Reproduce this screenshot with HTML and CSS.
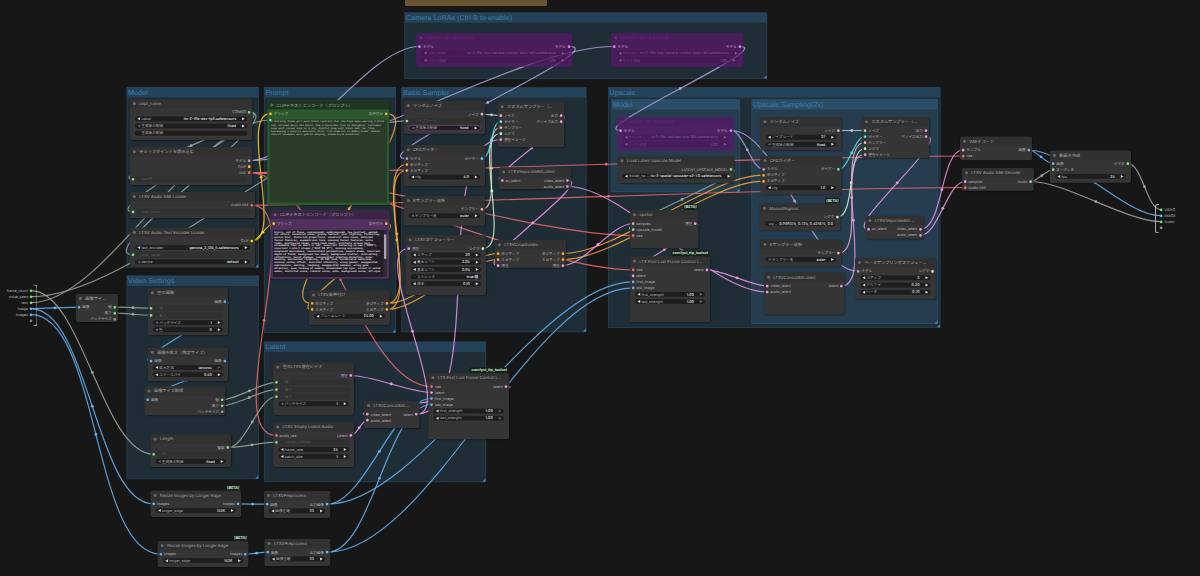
FILE: index.html
```
<!DOCTYPE html>
<html lang="ja">
<head>
<meta charset="utf-8"/>
<meta name="viewport" content="width=device-width,initial-scale=1.0"/>
    <title>Workflow</title>

    <link rel="stylesheet" href="styles.css">
</head>
<body>
<main id="canvas">
    <div class="note"></div>
    <section class="layer" id="groups"></section>
    <svg id="links" width="1200" height="576" viewBox="0 0 1200 576"></svg>
    <section class="layer" id="nodes"></section>

    <div class="layer">
        <ul class="port port_in">
            <li>frame_count<i></i></li>
            <li>noise_seed<i></i></li>
            <li>text<i></i></li>
            <li>image<i class="img"></i></li>
            <li>images<i class="img"></i></li>
            <li><i class="none"></i></li>
        </ul>
        <ul class="port port_out">
            <li><i></i>VIDEO</li>
            <li><i class="img"></i>IMAGE</li>
            <li><i></i>Audio</li>
            <li><i class="none"></i></li>
        </ul>
    </div>
</main><!-- canvas -->

<script src="graph.js"></script>
</body>
</html>
```
FILE: styles.css
```
*{margin:0;padding:0;box-sizing:border-box;}
li{list-style:none;}

body{
    overflow:hidden;
    background:#171717;
    font-family:Inter,"Noto Sans CJK JP",sans-serif;
    text-rendering:geometricPrecision;}

#canvas{
    position:relative; overflow:hidden;
    width:1200px;height:576px;
    background:#171717;}

/* everything in a layer is in graph units, zoomed out to 30% */
.layer{
    position:absolute;
    left:0;top:0;
    width:4000px;height:1920px;
    transform:scale(.3) rotate(.003deg);
    transform-origin:0 0;}

#links{position:absolute;left:0;top:0;}
#links path{fill:none;stroke-width:1.2;}

.note{
    position:absolute;
    left:405px;top:-6px;
    width:142px;height:12px;
    background:#6b5531;
    border-radius:1px;}

/* groups */
.group{
    position:absolute;
    background:rgba(56,112,150,.25);
    border:2px solid rgba(56,118,158,.4);}

.group h2{
    height:33px;
    padding-left:3px;
    background:rgba(52,112,158,.32);
    color:#3a7dab;
    font:400 24px/32px "Liberation Sans",sans-serif;
    white-space:nowrap;}

.group::after{
    content:"";
    position:absolute;
    right:0;bottom:0;
    border:5px solid transparent;
    border-right-color:#3d87b8;border-bottom-color:#3d87b8;}

/* nodes */
.node{
    position:absolute;
    display:flex;flex-direction:column;
    background:#353535;
    border-radius:6px;
    box-shadow:2px 2px 5px rgba(0,0,0,.5);
    color:#b4b4b4;
    font-size:12px;
    white-space:nowrap;}

.node h3{
    flex:none;
    display:flex;align-items:center;
    height:30px;
    padding-left:10px;gap:11px;
    background:#313131;
    border-radius:6px 6px 0 0;
    color:#a8a8a8;
    font-size:14px;font-weight:400;}

.node h3::before{
    content:"";
    width:10px;height:10px;
    background:#6a6a6a;
    border-radius:50%;}

.slots{
    flex:none;
    display:flex;justify-content:space-between;
    padding:4px 6px 0;}

.slots li{
    display:flex;align-items:center;
    height:20px;gap:6px;
    line-height:20px;}

.outs li{justify-content:flex-end;}

.dot{
    flex:none;
    width:9px;height:9px;
    border-radius:50%;}

.widgets{
    flex:1;min-height:0;
    display:flex;flex-direction:column;
    padding:2px 15px 0;
    gap:4px;}

.widget{
    flex:none;
    position:relative;
    display:flex;align-items:center;
    height:20px;
    padding:0 9px;gap:4px;
    background:#1e1e1e;
    border:1px solid #555;
    border-radius:10px;
    line-height:18px;}

.widget b{
    margin-left:auto;
    padding-right:16px;
    color:#eee;
    font-weight:500;}

.widget::before,
.widget.arrow::after{
    content:"";
    border:5px solid transparent;
    border-left-width:0;
    border-right:9px solid transparent;}

.widget.arrow::before{border-right-color:#ddd;}
.widget.arrow::after{
    border-right-width:0;
    border-left:9px solid #ddd;}
.widget.dim::before{border-right-color:#666;}
.widget.dimend::after{border-left-color:#666;}
.widget.wide{padding-left:0;}
.widget.wide b{padding-right:0;}
.widget.focus{border:2px solid #8d3aa5;}
.widget.toggle b{padding-right:0;}
.widget.toggle::after{
    content:"";
    width:14px;height:14px;
    margin-left:-2px;
    background:#8799b5;
    border-radius:50%;}

/* widget fed by a link */
.widget.linked{
    background:#303030;
    border-color:transparent;
    color:#5e5e5e;}
.widget.linked .dot{
    position:absolute;
    left:-10px;top:5px;}

.badge{
    position:absolute;
    right:2px;top:-20px;
    padding:0 4px;
    background:#0d2614;
    border-radius:3px;
    color:#f0f6f0;
    font-size:12.5px;font-weight:600;line-height:19px;}

.text{
    flex:1;min-height:0;
    overflow:hidden;
    margin:9px 8px 8px;
    padding:4px;
    color:#d3ddd3;
    font-family:"Liberation Mono",monospace;
    font-size:8.3px;line-height:10.5px;
    white-space:pre;}

/* node colours */
.green{background:#2b592c;}
.green h3{background:#1e3620;}
.green .text{background:#2a3b2a;}
.green .text::before{
    content:"";
    position:absolute;
    left:6px;top:61px;
    width:8px;height:8px;
    background:#7ee88a;
    border-radius:50%;}

.purple{background:#50305d;}
.purple h3{background:#3b2445;}
.purple .text{
    margin-top:12px;margin-bottom:6px;
    padding:2px 4px;
    background:#251d29;
    border-right:12px solid #302b33;
    color:#eee;
    font-weight:700;line-height:9.3px;}
.purple .text::after{
    content:"";
    position:absolute;
    right:10px;top:80px;
    width:8px;height:82px;
    background:#a9a3ac;
    border-radius:4px;}

.bypass{
    background:rgba(98,22,112,.68);
    box-shadow:none;
    color:#c9a5d2;}
.bypass h3{background:rgba(70,30,90,.28);color:#632d74;}
.bypass h3::before{background:#632d74;}
.bypass .widget{
    background:rgba(55,20,70,.28);
    border-color:transparent;
    color:#6f3a80;}
.bypass .widget b{color:#8a5a9c;font-weight:400;}
.bypass .widget.arrow::before{border-right-color:#8c559e;}
.bypass .widget.arrow::after{border-left-color:#8c559e;}

/* subgraph inputs and outputs */
.port{
    position:absolute;
    color:#bbb;
    font-size:12px;line-height:20px;}
.port li{display:flex;align-items:center;height:20px;gap:6px;}
.port i{
    width:9px;height:9px;
    background:#6fe26f;
    border-radius:50%;}
.port i.img{background:#64b5f6;}
.port i.none{background:#888;}
.port::before{
    content:"";
    position:absolute;
    top:0;bottom:0;
    width:12px;
    border:3px solid #bbb;}

.port_in{
    left:0;top:948px;
    width:125px;height:140px;
    padding:11px 17px 0 0;}
.port_in li{justify-content:flex-end;}
.port_in::before{
    right:0;
    border-left:0;
    border-radius:0 10px 10px 0;}

.port_out{
    left:3850px;top:680px;
    width:130px;height:98px;
    padding:9px 0 0 16px;}
.port_out::before{
    left:0;
    border-right:0;
    border-radius:10px 0 0 10px;}
```
FILE: graph.js
```
const groups = [
    ['Camera LoRAs (Ctrl-B to enable)', 404.5, 12.3, 767, 79],
    ['Model', 126.5, 87, 259, 268],
    ['Prompt', 264, 87, 396, 333],
    ['Basic Sampler', 401.5, 87, 586.5, 332],
    ['Video Settings', 126.5, 275.5, 259, 479],
    ['Latent', 264, 341.5, 486, 482],
    ['Upscale', 608, 87, 940.5, 328],
    ['Model', 611.5, 99, 740, 192],
    ['Upscale Sampling(2x)', 751.5, 99, 938, 324],
];

const C = {
    model:'#b39ddb', clip:'#ffd500', vae:'#f06a6a', lat:'#ee96e8', img:'#64b5f6',
    cond:'#ffa931', noise:'#c4c4c4', guider:'#55e6e6', sampler:'#ecb4b4',
    sigma:'#cdffcd', val:'#7de88a', int:'#99aa99', audio:'#a5a5a5', none:'#999',
};

const positive = `A charming anime girl with black twintail hair and blue eyes wearing a black
top, striped skirt and boots. She transitions from an energetic, confident
pose with raised arms to a shy, bashful pose with hands near her face,
expressing a playful emotional shift from cheerful to embarrassed. Smooth
natural movement with gentle swaying, anime-style animation.`;

const negative = `blurry, out of focus, overexposed, underexposed, low contrast, washed
out colors, excessive noise, grainy texture, poor lighting, flickering,
motion blur, distorted proportions, unnatural skin tones, deformed
facial features, asymmetrical face, missing facial features, extra
limbs, disfigured hands, wrong hand count, artifacts around text,
unreadable text on shirt or hat, incorrect lettering on cap ("PNTR"),
incorrect t-shirt slogan ("JUST DO IT"), missing microphone,
misplaced microphone, inconsistent perspective, camera shake, incorrect
depth of field, background too sharp, background clutter, distracting
reflections, harsh shadows, inconsistent lighting direction, color
banding, cartoonish rendering, 3D CGI look, unrealistic materials,
uncanny valley effect, incorrect ethnicity, wrong gender, exaggerated
expressions, smiling, laughing, exaggerated sadness, wrong gaze
direction, eyes looking at camera, mismatched lip sync, silent or muted
audio, distorted voice, robotic voice, echo, background noise, off-sync`;

/* id: title, left, top, right, bottom, inputs, outputs, widgets, class, badge
   slots are "label:type", widgets are "label|value|flags" */
const nodes = {
    lora1:['LoRAローダーモデルのみ', 416.5,33.3,572,67, 'モデル:model','モデル:model', ['lora_name|ltx-2-19b-lora-camera-control-dolly-left.safetensors','モデル強度|1.00'],'bypass'],
    lora2:['LoRAローダーモデルのみ', 611,33.3,743,67, 'モデル:model','モデル:model', ['lora_na …|ltx-2-19b-lora-camera-control-dolly-left.safetensors','モデル強度|1.00'],'bypass'],
    ckptName:['ckpt_name', 130,99,252.3,140, '','COMBO:val', ['value|ltx-2-19b-dev-fp8.safetensors','生成後の制御|fixed|dim','生成後の制御||plain']],
    ckpt:['チェックポイントを読み込む', 130,147.3,252.3,185, '','モデル:model,CLIP:clip,VAE:vae', ['ckpt名||linked']],
    ave:['LTXV Audio VAE Loader', 130,192,255,218, '','Audio VAE:vae', ['ckpt_name||linked']],
    te:['LTXV Audio Text Encoder Loader', 130,227.7,255,267, '','CLIP:clip', ['text_encoder|gemma_3_12B_it.safetensors','ckpt_name||linked','device|default|dim']],
    pos:['CLIPテキストエンコード（プロンプト）', 267.3,100.5,389.3,205, 'クリップ:clip','条件付け:cond', positive,'green'],
    neg:['CLIPテキストエンコード（プロンプト）', 270.7,210.3,389.3,278.7, 'クリップ:clip','条件付け:cond', negative,'purple'],
    cond:['LTXV条件付け', 309,290.3,390,325, 'ポジティブ:cond,ネガティブ:cond','ポジティブ:cond,ネガティブ:cond', ['フレームレート|25.00']],
    noise:['ランダムノイズ', 403.7,101,485,134, '','ノイズ:noise', ['ノイズシード||linked','生成後の制御|fixed|dim focus']],
    cfg:['CFGガイダー', 403.7,145.3,485,186, 'モデル:model,ポジティブ:cond,ネガティブ:cond','ガイダー:guider', ['cfg|4.0']],
    ksel:['Kサンプラー選択', 403.7,196,485,225.7, '','サンプラー:sampler', ['サンプラー名|euler|dim']],
    sched:['LTXVスケジューラー', 405.7,235.3,486,295, '潜在:lat','シグマ:sigma', ['ステップ|20','最大シフト|2.05','基本シフト|0.95','ストレッチ|true|toggle','端末|0.10']],
    custom:['カスタムサンプラー（…', 497.7,102.3,564.3,147.3, 'ノイズ:noise,ガイダー:guider,サンプラー:sampler,シグマ:sigma,潜在イメージ:lat','出力:lat,デノイズ出力:lat', []],
    sep:['LTXVSeparateAVLatent', 499.3,167.3,570.7,189.3, 'av_latent:lat','video_latent:lat,audio_latent:lat', []],
    crop:['LTXVCropGuides', 495,240.3,566,267.5, 'ポジティブ:cond,ネガティブ:cond,潜在:lat','ポジティブ:cond,ネガティブ:cond,潜在:lat', []],
    size:['画像サイ…', 76,294,118,322, '画像:img','幅:val,高さ:val,バッチサイズ:none', []],
    empty:['空の画像', 148,288.3,228,335, '','画像:img', ['幅||linked','高さ||linked','バッチサイズ|1|dim','色|0|dim']],
    scale:['画像を拡大（指定サイズ）', 148,347.7,228,381, '画像:img','画像:img', ['拡大方法|lanczos|dimend','スケールバイ|0.50']],
    getSize:['画像サイズ取得', 144.7,386.5,225.3,415, '画像:img','幅:val,高さ:val,バッチサイズ:none', []],
    length:['Length', 150.5,434.3,231,467, '','整数:val', ['値||linked','生成後の制御|fixed|dim']],
    vid:['空のLTXV潜在ビデオ', 273.3,362.3,354,415, '','潜在:lat', ['幅||linked','高さ||linked','長さ||linked','バッチサイズ|1|dim']],
    aud:['LTXV Empty Latent Audio', 273.3,422.3,354,467, 'audio_vae:vae','Latent:lat', ['frames_number||linked','frame_rate|25','batch_size|1']],
    concat:['LTXVConcatAVL…', 364.3,401,419.3,428, 'video_latent:lat,audio_latent:lat','latent:lat', []],
    flf:['LTX First Last Frame Control (…', 428.5,373.3,509,439, 'vae:vae,latent:lat,first_image:img,last_image:img','latent:lat', ['first_strength|1.00|dimend','last_strength|1.00|dimend'],'','comfyui_ttp_toolset'],
    resize1:['Resize Images by Longer Edge', 150.5,490.7,241.3,517, 'images:img','images:img', ['longer_edge|1536'],'','[BETA]'],
    resize2:['Resize Images by Longer Edge', 157.7,540.9,248.5,567, 'images:img','images:img', ['longer_edge|1536'],'','[BETA]'],
    pre1:['LTXVPreprocess', 264,491,330.3,518, '画像:img','出力画像:img', ['画像圧縮|33']],
    pre2:['LTXVPreprocess', 264.7,539,330.3,566, '画像:img','出力画像:img', ['画像圧縮|33']],
    upLora:['LoRAローダーモデルのみ', 617.5,117.3,734,151, 'モデル:model','モデル:model', ['lora_na …|ltx-2-19b-distilled-lora-384.safetensors','モデル強度|1.00'],'bypass'],
    loadUp:['Load Latent Upscale Model', 617.5,156.2,734,183, '','LATENT_UPSCALE_MODEL:val', ['model_na …|ltx-2-spatial-upscaler-x2-1.0.safetensors']],
    spatial:['spatial', 630,210.3,698.5,248, 'samples:lat,upscale_model:val,vae:vae','潜在:lat', [],'','[BETA]'],
    flf2:['LTX First Last Frame Control (…', 630,256.6,710,322, 'vae:vae,latent:lat,first_image:img,last_image:img','latent:lat', ['first_strength|1.00|dimend','last_strength|1.00|dimend'],'','comfyui_ttp_toolset'],
    noise2:['ランダムノイズ', 760.5,117.3,841.5,150, '','ノイズ:noise', ['ノイズシード|37','生成後の制御|fixed|dim']],
    cfg2:['CFGガイダー', 760.5,156,841.5,194.5, 'モデル:model,ポジティブ:cond,ネガティブ:cond','ガイダー:guider', ['cfg|1.0']],
    manual:['ManualSigmas', 760,203.7,840.5,230.3, '','シグマ:sigma', ['sig …|0.909375, 0.725, 0.421875, 0.0|plain wide'],'','[BETA]'],
    ksel2:['Kサンプラー選択', 760.5,239.8,841.5,266.5, '','サンプラー:sampler', ['サンプラー名|euler|dim']],
    concat2:['LTXVConcatAVLatent', 764,272.7,844.5,314.5, 'video_latent:lat,audio_latent:lat','latent:lat', []],
    custom2:['カスタムサンプラー（…', 862,117.3,929,158, 'ノイズ:noise,ガイダー:guider,サンプラー:sampler,シグマ:sigma,潜在イメージ:lat','出力:lat,デノイズ出力:lat', []],
    sep2:['LTXVSeparateAVL…', 865.5,216,923.7,238.7, 'av_latent:lat','video_latent:lat,audio_latent:lat', []],
    beta:['ベータサンプリングスケジュー…', 855,258,935.7,299, 'モデル:model','シグマ:sigma', ['ステップ|3','アルファ|0.20','ベータ|0.70']],
    dec:['VAEデコード', 960,136.8,1032,160.3, 'サンプル:lat,vae:vae','画像:img', []],
    audDec:['LTXV Audio VAE Decode', 962,168.3,1033.7,190.8, 'samples:lat,Audio VAE:vae','Audio:val', []],
    video:['動画を作成', 1050,150.5,1131,182.7, '画像:img,オーディオ:val','ビデオ:val', ['fps|25']],
};

/* "from > to > type", i = input, o = output, w = widget */
const links = `
in.0 > length.w0 > int
in.1 > noise.w0 > int
in.2 > pos.text > int
in.3 > size.i0 > img
in.3 > resize1.i0 > img
in.4 > resize2.i0 > img
size.o0 > empty.w0 > int
size.o1 > empty.w1 > int
empty.o0 > scale.i0 > img
scale.o0 > getSize.i0 > img
getSize.o0 > vid.w0 > int
getSize.o1 > vid.w1 > int
length.o0 > vid.w2 > int
length.o0 > aud.w0 > int
ckptName.o0 > ckpt.w0 > int
ckptName.o0 > ave.w0 > int
ckptName.o0 > te.w1 > int
ckpt.o0 > lora1.i0 > model
ckpt.o0 > lora2.i0 > model
lora1.o0 > cfg.i0 > model
lora2.o0 > upLora.i0 > model
upLora.o0 > cfg2.i0 > model
upLora.o0 > beta.i0 > model
te.o0 > pos.i0 > clip
te.o0 > neg.i0 > clip
ckpt.o2 > flf.i0 > vae
ckpt.o2 > spatial.i2 > vae
ckpt.o2 > flf2.i0 > vae
ckpt.o2 > dec.i1 > vae
ave.o0 > aud.i0 > vae
ave.o0 > audDec.i1 > vae
pos.o0 > cond.i0 > cond
neg.o0 > cond.i1 > cond
cond.o0 > cfg.i1 > cond
cond.o1 > cfg.i2 > cond
cond.o0 > crop.i0 > cond
cond.o1 > crop.i1 > cond
crop.o0 > cfg2.i1 > cond
crop.o1 > cfg2.i2 > cond
crop.o2 > spatial.i0 > lat
noise.o0 > custom.i0 > noise
ksel.o0 > custom.i2 > sampler
sched.o0 > custom.i3 > sigma
cfg.o0 > custom.i1 > guider
concat.o0 > custom.i4 > lat
concat.o0 > sched.i0 > lat
custom.o0 > sep.i0 > lat
sep.o0 > crop.i2 > lat
sep.o1 > concat2.i1 > lat
vid.o0 > flf.i1 > lat
aud.o0 > concat.i1 > lat
flf.o0 > concat.i0 > lat
resize1.o0 > pre1.i0 > img
resize2.o0 > pre2.i0 > img
pre1.o0 > flf.i2 > img
pre1.o0 > flf2.i2 > img
pre2.o0 > flf.i3 > img
pre2.o0 > flf2.i3 > img
loadUp.o0 > spatial.i1 > int
spatial.o0 > flf2.i1 > lat
flf2.o0 > concat2.i0 > lat
noise2.o0 > custom2.i0 > noise
ksel2.o0 > custom2.i2 > sampler
manual.o0 > custom2.i3 > sigma
cfg2.o0 > custom2.i1 > guider
concat2.o0 > custom2.i4 > lat
custom2.o1 > sep2.i0 > lat
sep2.o0 > dec.i0 > lat
sep2.o1 > audDec.i0 > lat
dec.o0 > video.i0 > img
dec.o0 > out.1 > img
audDec.o0 > video.i1 > audio
audDec.o0 > out.2 > audio
video.o0 > out.0 > audio`;

const unit = v => (v / .3).toFixed(1) + 'px';
const list = s => s ? s.split(',').map(v => v.split(':')) : [];
const box = (l, t, r, b) => `left:${unit(l)};top:${unit(t)};width:${unit(r - l)};height:${unit(b - t)}`;
const dot = type => `<span class="dot" style="background:${C[type]}"></span>`;

function widget(w){
    const [label, value, flags = ''] = w.split('|');
    const linked = flags.includes('linked');
    const arrow = /linked|plain|toggle/.test(flags) ? '' : 'arrow';
    return `<div class="widget ${arrow} ${flags}">${linked ? dot('val') : ''}<span>${label}</span>${value ? `<b>${value}</b>` : ''}</div>`;
}

function node([title, l, t, r, b, ins, outs, widgets, cls = '', badge]){
    const body = typeof widgets === 'string'
        ? `<div class="text">${widgets}</div>`
        : `<div class="widgets">${widgets.map(widget).join('')}</div>`;
    return `<article class="node ${cls}" style="${box(l, t, r, b)}">
        <h3>${title}</h3>
        <div class="slots">
            <ul>${list(ins).map(([n, c]) => `<li>${dot(c)}${n}</li>`).join('')}</ul>
            <ul class="outs">${list(outs).map(([n, c]) => `<li>${n}${dot(c)}</li>`).join('')}</ul>
        </div>
        ${body}
        ${badge ? `<span class="badge">${badge}</span>` : ''}
    </article>`;
}

function point(ref){
    const [id, slot] = ref.split('.');
    if(id === 'in') return [31, 290.7 + slot * 6];
    if(id === 'out') return [1161, 209.7 + slot * 6];
    const [, l, t, r, , ins, outs] = nodes[id];
    if(slot === 'text') return [l + 3, t + 19.5];
    const i = Number(slot[1]);
    if(slot[0] === 'i') return [l + 3, t + 13.2 + i * 6];
    if(slot[0] === 'o') return [r - 3, t + 13.2 + i * 6];
    const rows = Math.max(list(ins).length, list(outs).length);
    return [l + 3, t + 13.8 + rows * 6 + i * 7.2];
}

function link(line){
    const [from, to, type] = line.split(' > ');
    const [x1, y1] = point(from);
    const [x2, y2] = point(to);
    const d = Math.hypot(x2 - x1, y2 - y1) * .25;
    return `<path d="M${x1} ${y1}C${x1 + d} ${y1} ${x2 - d} ${y2} ${x2} ${y2}" stroke="${C[type]}" opacity=".85"/>
        <circle cx="${(x1 + x2) / 2}" cy="${(y1 + y2) / 2}" r="1.4" fill="${C[type]}"/>`;
}

document.getElementById('groups').innerHTML =
    groups.map(([name, ...b]) => `<div class="group" style="${box(...b)}"><h2>${name}</h2></div>`).join('');
document.getElementById('links').innerHTML = links.trim().split('\n').map(link).join('');
document.getElementById('nodes').innerHTML = Object.values(nodes).map(node).join('');
```
